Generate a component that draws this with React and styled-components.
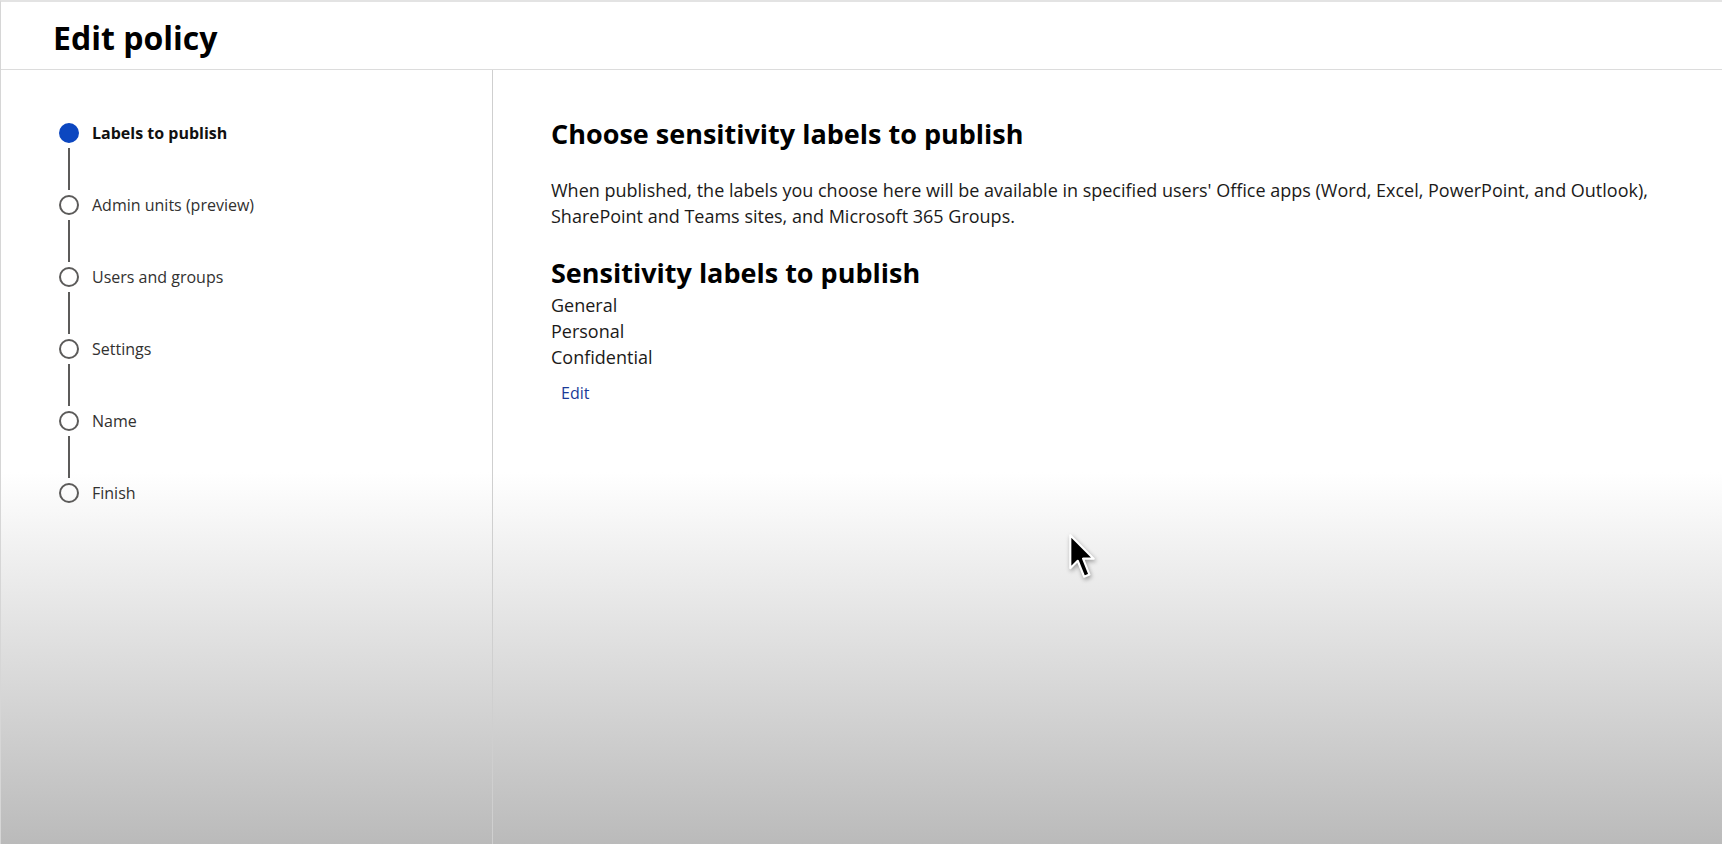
import React from 'react';
import styled, { createGlobalStyle } from 'styled-components';

const GlobalStyle = createGlobalStyle`
  html, body {
    margin: 0;
    padding: 0;
    height: 100%;
  }
  body {
    font-family: "Open Sans", "Noto Sans", "Liberation Sans", sans-serif;
    color: #1b1a19;
    background: #fff;
  }
`;

const steps = [
  'Labels to publish',
  'Admin units (preview)',
  'Users and groups',
  'Settings',
  'Name',
  'Finish'
];

const labels = ['General', 'Personal', 'Confidential'];

const App = () => (
  <>
    <GlobalStyle />
    <Page>
      <Header>
        <Title>Edit policy</Title>
      </Header>
      <Body>
        <Sidebar>
          <Stepper>
            {steps.map((step, i) => (
              <Step key={step}>
                <Marker>
                  <Dot active={i === 0} />
                  {i < steps.length - 1 && <Connector />}
                </Marker>
                <StepLabel active={i === 0}>{step}</StepLabel>
              </Step>
            ))}
          </Stepper>
        </Sidebar>
        <Main>
          <Heading>Choose sensitivity labels to publish</Heading>
          <Description>
            When published, the labels you choose here will be available in
            specified users' Office apps (Word, Excel, PowerPoint, and Outlook),
            SharePoint and Teams sites, and Microsoft 365 Groups.
          </Description>
          <SubHeading>Sensitivity labels to publish</SubHeading>
          <LabelList>
            {labels.map(label => (
              <li key={label}>{label}</li>
            ))}
          </LabelList>
          <EditLink href="#">Edit</EditLink>
        </Main>
      </Body>
      <Cursor viewBox="0 0 28 46" aria-hidden="true">
        <path
          d="M3 3 L3 34 L10 27 L16 42 L21 40 L15 25 L25 25 Z"
          fill="#000"
          stroke="#fff"
          strokeWidth="2"
          strokeLinejoin="round"
        />
      </Cursor>
    </Page>
  </>
);

const Page = styled.div`
  position: relative;
  display: flex;
  flex-direction: column;
  min-height: 100vh;
  box-sizing: border-box;
  border-top: 2px solid #e3e3e3;
  border-left: 1px solid #d6d6d6;
  background: linear-gradient(
    to bottom,
    #ffffff 0,
    #ffffff 470px,
    #bababa 844px
  );
`;

const Header = styled.header`
  display: flex;
  align-items: center;
  box-sizing: border-box;
  height: 68px;
  padding: 4px 0 0 52px;
  border-bottom: 1px solid #dcdcdc;
  background: #fff;
`;

const Title = styled.h1`
  margin: 0;
  font-size: 32px;
  font-weight: 700;
  color: #000;
`;

const Body = styled.div`
  flex: 1;
  display: grid;
  grid-template-columns: 492px 1fr;
`;

const Sidebar = styled.nav`
  border-right: 1px solid #cfcfcf;
  padding: 53px 0 0 58px;
`;

const Stepper = styled.ol`
  list-style: none;
  margin: 0;
  padding: 0;
`;

const Step = styled.li`
  display: flex;
  gap: 13px;
`;

const Marker = styled.div`
  display: flex;
  flex-direction: column;
  align-items: center;
  width: 20px;
`;

const Dot = styled.span`
  box-sizing: border-box;
  width: 20px;
  height: 20px;
  border-radius: 50%;
  border: 2px solid ${p => (p.active ? '#0c47c0' : '#5c5b5a')};
  background: ${p => (p.active ? '#0c47c0' : 'transparent')};
`;

const Connector = styled.span`
  width: 2px;
  height: 42px;
  margin: 5px 0;
  background: #5c5b5a;
`;

const StepLabel = styled.span`
  line-height: 20px;
  font-size: 16px;
  font-weight: ${p => (p.active ? 700 : 400)};
  color: ${p => (p.active ? '#111' : '#323130')};
`;

const Main = styled.main`
  padding: 47px 40px 0 58px;
`;

const Heading = styled.h2`
  margin: 0;
  font-size: 27px;
  line-height: 34px;
  font-weight: 700;
  color: #000;
`;

const Description = styled.p`
  margin: 26px 0 0;
  max-width: 1125px;
  font-size: 18px;
  line-height: 26px;
  color: #1b1a19;
`;

const SubHeading = styled.h3`
  margin: 27px 0 0;
  font-size: 27px;
  line-height: 34px;
  font-weight: 700;
  color: #000;
`;

const LabelList = styled.ul`
  list-style: none;
  margin: 2px 0 0;
  padding: 0;
  font-size: 18px;
  line-height: 26px;
  color: #1b1a19;
`;

const EditLink = styled.a`
  display: inline-block;
  margin: 12px 0 0 10px;
  font-size: 16px;
  line-height: 22px;
  color: #1a3a98;
  text-decoration: none;
`;

const Cursor = styled.svg`
  position: absolute;
  left: 1066px;
  top: 530px;
  width: 30px;
  height: 49px;
  filter: drop-shadow(1px 2px 2px rgba(0, 0, 0, 0.35));
`;

export default App;
